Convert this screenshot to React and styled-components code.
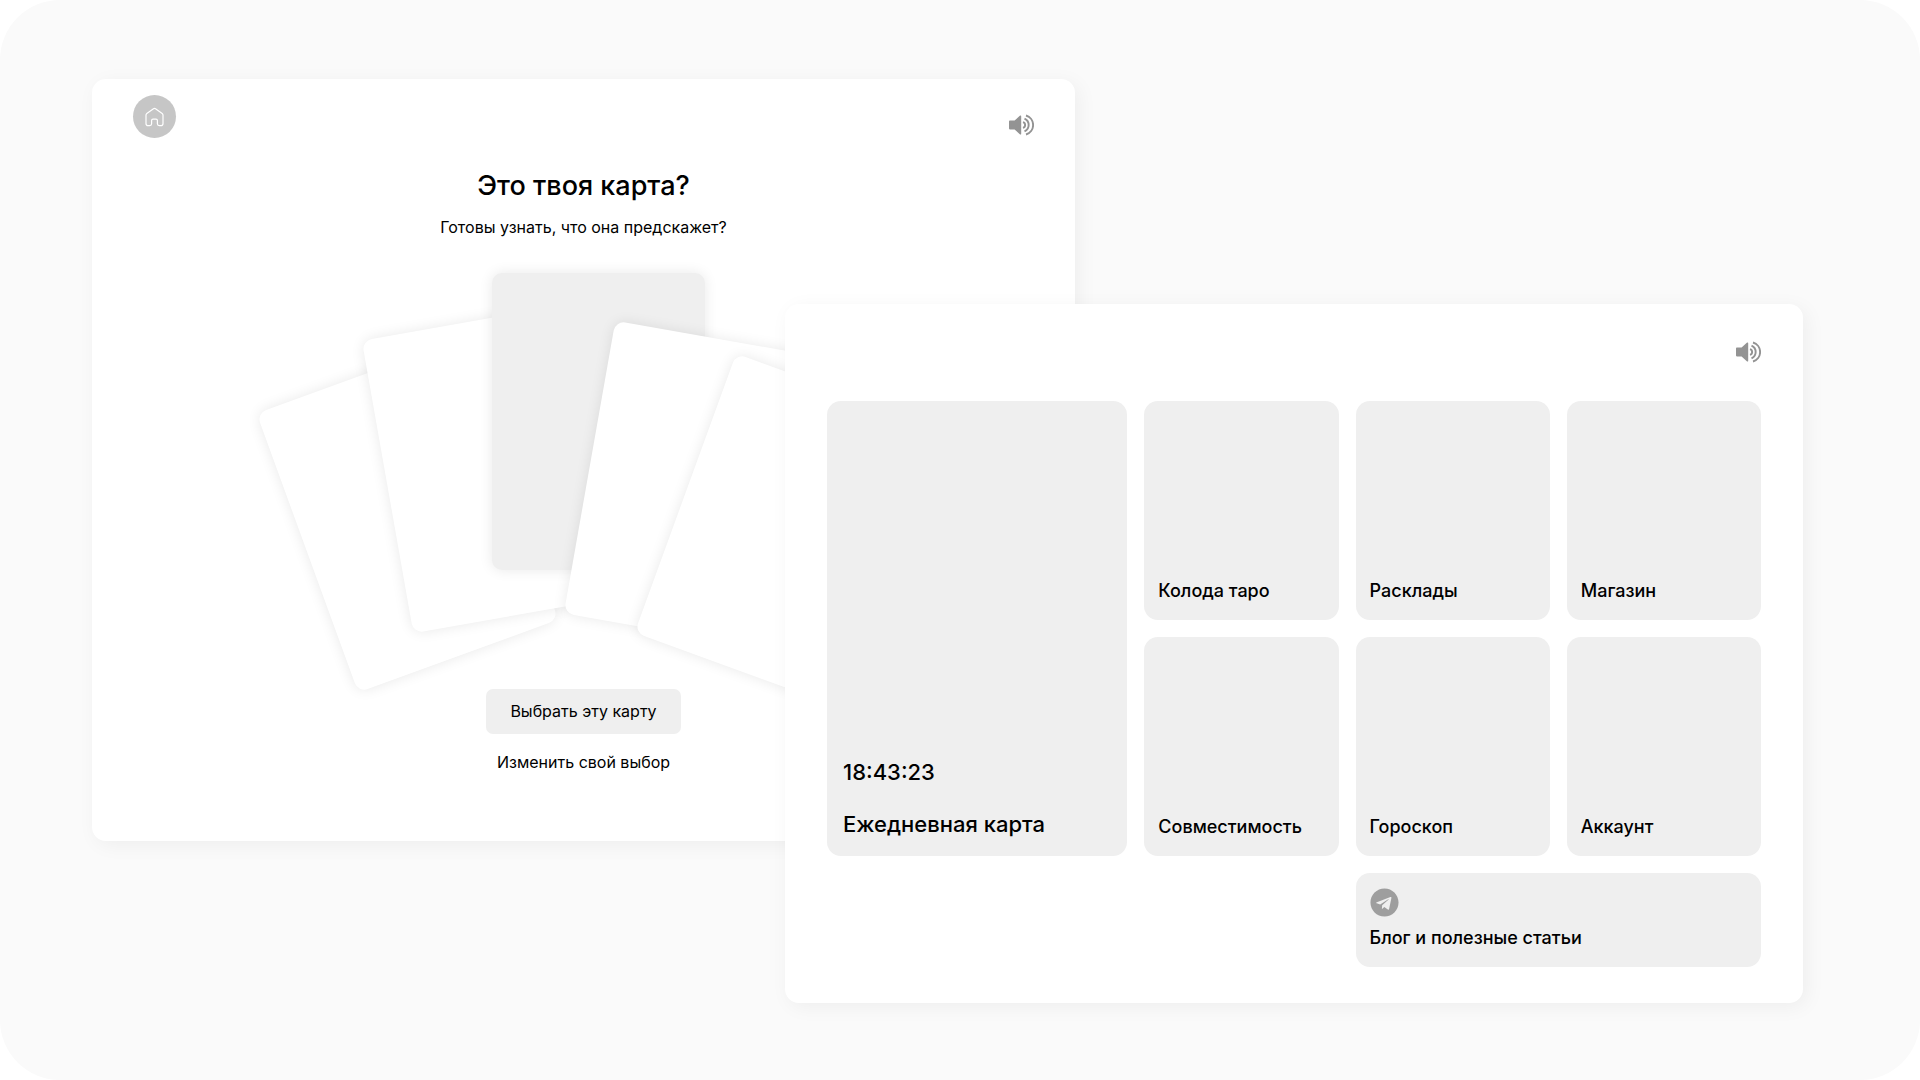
import React from "react";
import styled, { createGlobalStyle } from "styled-components";
import { FaTelegram } from "react-icons/fa";

const GlobalStyle = createGlobalStyle`
  *, *::before, *::after { box-sizing: border-box; }
  body {
    margin: 0;
    background: #fff;
    color: #000;
    font-family: Inter, "Noto Sans", sans-serif;
  }
  h1, h2, p { margin: 0; }
  button { font: inherit; color: inherit; border: 0; cursor: pointer; }
  a { color: inherit; text-decoration: none; }
`;

const Stage = styled.div`
  min-height: 100vh;
  padding: 79px 117px 77px 92px;
  border-radius: 60px;
  background: #fafafa;
  display: grid;
  grid-template-columns: 693fr 290fr 728fr;
  grid-template-rows: 225fr 537fr 162fr;
`;

const Panel = styled.section`
  display: flex;
  flex-direction: column;
  border-radius: 14px;
  background: #fff;
  box-shadow: 4px 4px 20px rgba(0, 0, 0, 0.05);
`;

const PickPanel = styled(Panel)`
  grid-area: 1 / 1 / 3 / 3;
  padding: 16px 41px 40px;
  align-items: center;
`;

const MenuPanel = styled(Panel)`
  grid-area: 2 / 2 / 4 / 4;
  z-index: 1;
  padding: 35px 42px 36px;
  gap: 36px;
`;

const Header = styled.header`
  align-self: stretch;
  display: flex;
  justify-content: ${(p) => (p.$end ? "flex-end" : "space-between")};
  align-items: flex-end;
`;

const HomeButton = styled.button`
  width: 43px;
  height: 43px;
  padding: 0;
  border-radius: 50%;
  background: #c6c6c6;
  display: grid;
  place-items: center;
`;

const SoundButton = styled.button`
  height: 26px;
  padding: 0;
  background: none;
  color: #939393;
  display: grid;
  place-items: center;
`;

const Title = styled.h1`
  margin-top: 28px;
  font-size: 27px;
  line-height: 40px;
  font-weight: 500;
`;

const Subtitle = styled.p`
  margin-top: 10px;
  font-size: 16px;
  line-height: 22px;
`;

const Fan = styled.div`
  position: relative;
  align-self: stretch;
  height: 416px;
  margin-top: 35px;
`;

const Card = styled.div`
  position: absolute;
  left: calc(50% + ${(p) => p.$x}px);
  top: ${(p) => p.$y}px;
  width: 213px;
  height: 297px;
  border-radius: 10px;
  background: ${(p) => (p.$picked ? "#efefef" : "#fff")};
  box-shadow: 0 0 14px rgba(0, 0, 0, 0.09);
  transform: rotate(${(p) => p.$angle}deg);
`;

const PickButton = styled.button`
  height: 45px;
  padding: 0 24px 2px;
  border-radius: 7px;
  background: #efefef;
  font-size: 16px;
  line-height: 22px;
`;

const ChangeLink = styled.a`
  margin-top: 17px;
  font-size: 16px;
  line-height: 22px;
`;

const TileGrid = styled.nav`
  flex: 1;
  display: grid;
  grid-template-columns: 300fr repeat(3, 194fr);
  grid-template-rows: 219fr 219fr 94fr;
  gap: 17px;
`;

const Tile = styled.a`
  display: flex;
  flex-direction: column;
  justify-content: flex-end;
  padding: 16px 14px;
  border-radius: 14px;
  background: #efefef;
  font-size: 18px;
  line-height: 26px;
  font-weight: 500;
`;

const DailyTile = styled(Tile)`
  grid-row: span 2;
  padding: 16px;
  gap: 20px;
  font-size: 22px;
  line-height: 32px;
`;

const BlogTile = styled(Tile)`
  grid-column: 3 / span 2;
  padding-top: 14px;
  gap: 8px;

  svg { color: #9e9e9e; }
`;

function HomeIcon() {
  return (
    <svg width="19" height="20" viewBox="0.500 0 19 20" fill="none" stroke="#fff" strokeWidth="1.2" strokeLinejoin="round" aria-hidden="true">
      <path d="M9 1.7 2.3 6.4Q1.5 7 1.5 8v8.4c0 1.4.8 2.2 2.1 2.2h1.6c1.2 0 1.900-.6 1.900-1.800v-3.200c0-.9.5-1.400 1.400-1.400h3c.9 0 1.400.5 1.400 1.400v3.200c0 1.200.7 1.800 1.900 1.800h1.600c1.300 0 2.100-.8 2.100-2.200V8q0-1-.8-1.600L11 1.700q-1-.7-2 0Z" />
    </svg>
  );
}

function SoundIcon() {
  return (
    <svg width="25" height="22" viewBox="0 0 25 22" fill="none" stroke="currentColor" strokeWidth="1.9" aria-hidden="true">
      <path d="M.8 6.600h4.800l5.200-4.800c.8-.7 1.400-.4 1.400.5v17.400c0 .9-.6 1.200-1.400.5l-5.200-4.800H.8c-.5 0-.8-.3-.8-.8V7.400c0-.5.3-.8.8-.8Z" fill="currentColor" stroke="none" />
      <path d="M14 8.200a2.900 2.900 0 0 1 0 5.600" />
      <path d="M15.500 4.600a7 7 0 0 1 0 12.800" />
      <path d="M17 1.500a9.900 9.900 0 0 1 0 19" />
    </svg>
  );
}

function SoundToggle() {
  return (
    <SoundButton type="button" aria-label="Звук">
      <SoundIcon />
    </SoundButton>
  );
}

const cards = [
  { x: -283, y: 95, angle: -20 },
  { x: -198, y: 47, angle: -10 },
  { x: -92, y: 0, angle: 0, picked: true },
  { x: 4, y: 64, angle: 10 },
  { x: 95, y: 108, angle: 20 },
];

const sections = ["Колода таро", "Расклады", "Магазин", "Совместимость", "Гороскоп", "Аккаунт"];

export default function App() {
  return (
    <>
      <GlobalStyle />
      <Stage>
        <PickPanel>
          <Header>
            <HomeButton type="button" aria-label="Домой">
              <HomeIcon />
            </HomeButton>
            <SoundToggle />
          </Header>
          <Title>Это твоя карта?</Title>
          <Subtitle>Готовы узнать, что она предскажет?</Subtitle>
          <Fan>
            {cards.map((card) => (
              <Card key={card.angle} $x={card.x} $y={card.y} $angle={card.angle} $picked={card.picked} />
            ))}
          </Fan>
          <PickButton type="button">Выбрать эту карту</PickButton>
          <ChangeLink href="#cards">Изменить свой выбор</ChangeLink>
        </PickPanel>
        <MenuPanel>
          <Header $end>
            <SoundToggle />
          </Header>
          <TileGrid>
            <DailyTile href="#daily">
              <span>18:43:23</span>
              <span>Ежедневная карта</span>
            </DailyTile>
            {sections.map((name) => (
              <Tile key={name} href="#section">{name}</Tile>
            ))}
            <BlogTile href="#blog">
              <FaTelegram size={29} aria-hidden="true" />
              <span>Блог и полезные статьи</span>
            </BlogTile>
          </TileGrid>
        </MenuPanel>
      </Stage>
    </>
  );
}
